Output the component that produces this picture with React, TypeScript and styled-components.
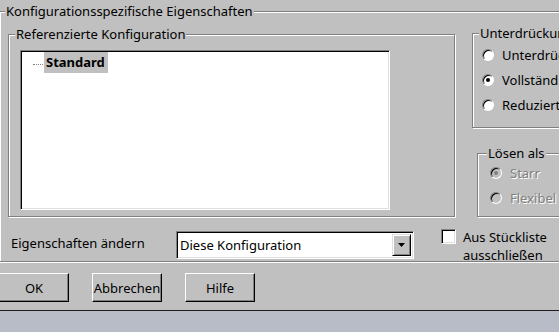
import React from 'react';
import styled, { createGlobalStyle } from 'styled-components';

const GlobalStyle = createGlobalStyle`
    html, body {
        margin: 0;
        padding: 0;
        background: #c0c0c0;
    }
`;

const FONT = `"Noto Sans", "Liberation Sans", sans-serif`;

// Window
const Div_Window = styled.div`
    width: 559px;
    height: 332px;
    overflow: hidden;
    display: flex;
    flex-direction: column;
    background-color: #c0c0c0;
    font-family: ${FONT};
    font-size: 13px;
    color: #000;
`;

// etched group box, caption sits over the top line
const Div_Group = styled.div<{ _width: string; _height: string; _marginTop?: string; _marginLeft?: string }>`
    position: relative;
    box-sizing: border-box;
    flex: none;
    width: ${(p) => p._width};
    height: ${(p) => p._height};
    margin-top: ${(p) => p._marginTop || '0'};
    margin-left: ${(p) => p._marginLeft || '0'};
    border: 1px solid #808080;
    box-shadow: inset 1px 1px 0 #fff, 1px 1px 0 #fff;
`;

const Label_Caption = styled.span<{ _left?: string }>`
    position: absolute;
    top: -9px;
    left: ${(p) => p._left || '6px'};
    padding: 0 1px;
    line-height: 16px;
    background-color: #c0c0c0;
    white-space: nowrap;
`;

const Div_GroupBody = styled.div<{ _padding: string }>`
    display: flex;
    flex-direction: column;
    padding: ${(p) => p._padding};
`;

const Div_TopRow = styled.div`
    display: flex;
    align-items: flex-start;
`;

const Div_RightColumn = styled.div`
    display: flex;
    flex-direction: column;
    margin-left: 17px;
`;

// tree
const Div_Tree = styled.div`
    box-sizing: border-box;
    width: 370px;
    height: 160px;
    background-color: #fff;
    border: 1px solid;
    border-color: #808080 #fff #fff #808080;
    box-shadow: inset 1px 1px 0 #000, inset -1px -1px 0 #dfdfdf;
    padding: 1px 0 0 12px;
    display: flex;
    align-items: flex-start;
`;

const Span_TreeLine = styled.span`
    width: 10px;
    margin-top: 12px;
    border-top: 1px dotted #808080;
`;

const Span_TreeItem = styled.span`
    background-color: #c0c0c0;
    font-weight: bold;
    line-height: 21px;
    padding: 0 3px 0 2px;
    margin-left: 1px;
`;

// radio buttons
const Div_RadioList = styled.div`
    display: flex;
    flex-direction: column;
    gap: 9px;
`;

const Label_Radio = styled.label<{ _disabled?: boolean }>`
    display: flex;
    align-items: center;
    gap: 8px;
    height: 16px;
    white-space: nowrap;
    color: ${(p) => (p._disabled ? '#808080' : '#000')};
    text-shadow: ${(p) => (p._disabled ? '1px 1px 0 #fff' : 'none')};
`;

const Span_RadioMark = styled.span<{ _checked?: boolean; _disabled?: boolean }>`
    position: relative;
    box-sizing: border-box;
    width: 12px;
    height: 12px;
    flex: none;
    border-radius: 50%;
    border: 1px solid;
    border-color: #808080 #fff #fff #808080;
    box-shadow: inset 1px 1px 0 #000;
    background-color: ${(p) => (p._disabled ? '#c0c0c0' : '#fff')};

    &::after {
        content: '';
        display: ${(p) => (p._checked ? 'block' : 'none')};
        position: absolute;
        left: 3px;
        top: 3px;
        width: 4px;
        height: 4px;
        border-radius: 50%;
        background-color: ${(p) => (p._disabled ? '#808080' : '#000')};
    }
`;

// bottom row of the group
const Div_FieldRow = styled.div`
    display: flex;
    align-items: flex-start;
    margin-top: 12px;
`;

const Label_Field = styled.span`
    width: 165px;
    margin: 6px 0 0 3px;
    line-height: 16px;
    white-space: nowrap;
`;

const Div_Combo = styled.div`
    box-sizing: border-box;
    width: 238px;
    height: 28px;
    margin-top: 2px;
    background-color: #fff;
    border: 1px solid;
    border-color: #808080 #fff #fff #808080;
    box-shadow: inset 1px 1px 0 #000, inset -1px -1px 0 #dfdfdf;
    display: flex;
    align-items: center;
    padding: 0 2px 0 3px;
`;

const Span_ComboText = styled.span`
    flex: 1;
    white-space: nowrap;
`;

const Span_ComboButton = styled.span`
    box-sizing: border-box;
    width: 19px;
    height: 22px;
    background-color: #c0c0c0;
    border: 1px solid;
    border-color: #dfdfdf #000 #000 #dfdfdf;
    box-shadow: inset 1px 1px 0 #fff, inset -1px -1px 0 #808080;
    display: flex;
    align-items: center;
    justify-content: center;
`;

const Label_Check = styled.label`
    display: flex;
    align-items: flex-start;
    gap: 7px;
    margin-left: 27px;
    line-height: 18px;
`;

const Span_CheckBox = styled.span`
    box-sizing: border-box;
    width: 15px;
    height: 15px;
    flex: none;
    background-color: #fff;
    border: 1px solid;
    border-color: #808080 #fff #fff #808080;
    box-shadow: inset 1px 1px 0 #000, inset -1px -1px 0 #dfdfdf;
`;

const Span_CheckText = styled.span`
    margin-top: -1px;
    white-space: nowrap;
`;

// buttons
const Div_ButtonRow = styled.div`
    display: flex;
    gap: 23px;
    margin: 11px 0 0 -1px;
`;

const Button_Dialog = styled.button`
    box-sizing: border-box;
    width: 70px;
    height: 29px;
    padding: 0;
    background-color: #c0c0c0;
    border: 1px solid;
    border-color: #fff #000 #000 #fff;
    box-shadow: inset -1px -1px 0 #808080;
    font-family: ${FONT};
    font-size: 13px;
    color: #000;
`;

const Div_Footer = styled.div`
    flex: 1;
    margin-top: 8px;
    border-top: 1px solid #1e1e1e;
    background-color: #b7bcc7;
`;

const App = () => {
    return (
        <>
            <GlobalStyle />
            <Div_Window>
                <Div_Group _width="620px" _height="251px" _marginTop="11px" _marginLeft="-1px">
                    <Label_Caption _left="5px">Konfigurationsspezifische Eigenschaften</Label_Caption>
                    <Div_GroupBody _padding="21px 0 0 8px">
                        <Div_TopRow>
                            <Div_Group _width="447px" _height="183px" _marginTop="1px">
                                <Label_Caption>Referenzierte Konfiguration</Label_Caption>
                                <Div_GroupBody _padding="15px 0 0 11px">
                                    <Div_Tree>
                                        <Span_TreeLine />
                                        <Span_TreeItem>Standard</Span_TreeItem>
                                    </Div_Tree>
                                </Div_GroupBody>
                            </Div_Group>
                            <Div_RightColumn>
                                <Div_Group _width="140px" _height="95px">
                                    <Label_Caption>Unterdrückung</Label_Caption>
                                    <Div_GroupBody _padding="13px 0 0 9px">
                                        <Div_RadioList>
                                            <Label_Radio><Span_RadioMark />Unterdrückt</Label_Radio>
                                            <Label_Radio><Span_RadioMark _checked />Vollständig</Label_Radio>
                                            <Label_Radio><Span_RadioMark />Reduziert</Label_Radio>
                                        </Div_RadioList>
                                    </Div_GroupBody>
                                </Div_Group>
                                <Div_Group _width="120px" _height="64px" _marginTop="25px" _marginLeft="5px">
                                    <Label_Caption _left="9px">Lösen als</Label_Caption>
                                    <Div_GroupBody _padding="11px 0 0 12px">
                                        <Div_RadioList>
                                            <Label_Radio _disabled><Span_RadioMark _checked _disabled />Starr</Label_Radio>
                                            <Label_Radio _disabled><Span_RadioMark _disabled />Flexibel</Label_Radio>
                                        </Div_RadioList>
                                    </Div_GroupBody>
                                </Div_Group>
                            </Div_RightColumn>
                        </Div_TopRow>
                        <Div_FieldRow>
                            <Label_Field>Eigenschaften ändern</Label_Field>
                            <Div_Combo>
                                <Span_ComboText>Diese Konfiguration</Span_ComboText>
                                <Span_ComboButton>
                                    <svg width="7" height="4" viewBox="0 0 7 4">
                                        <path d="M0 0 H7 L3.5 4 Z" fill="#000" />
                                    </svg>
                                </Span_ComboButton>
                            </Div_Combo>
                            <Label_Check>
                                <Span_CheckBox />
                                <Span_CheckText>Aus Stückliste<br />ausschließen</Span_CheckText>
                            </Label_Check>
                        </Div_FieldRow>
                    </Div_GroupBody>
                </Div_Group>
                <Div_ButtonRow>
                    <Button_Dialog>OK</Button_Dialog>
                    <Button_Dialog>Abbrechen</Button_Dialog>
                    <Button_Dialog>Hilfe</Button_Dialog>
                </Div_ButtonRow>
                <Div_Footer />
            </Div_Window>
        </>
    );
};

export default App;
